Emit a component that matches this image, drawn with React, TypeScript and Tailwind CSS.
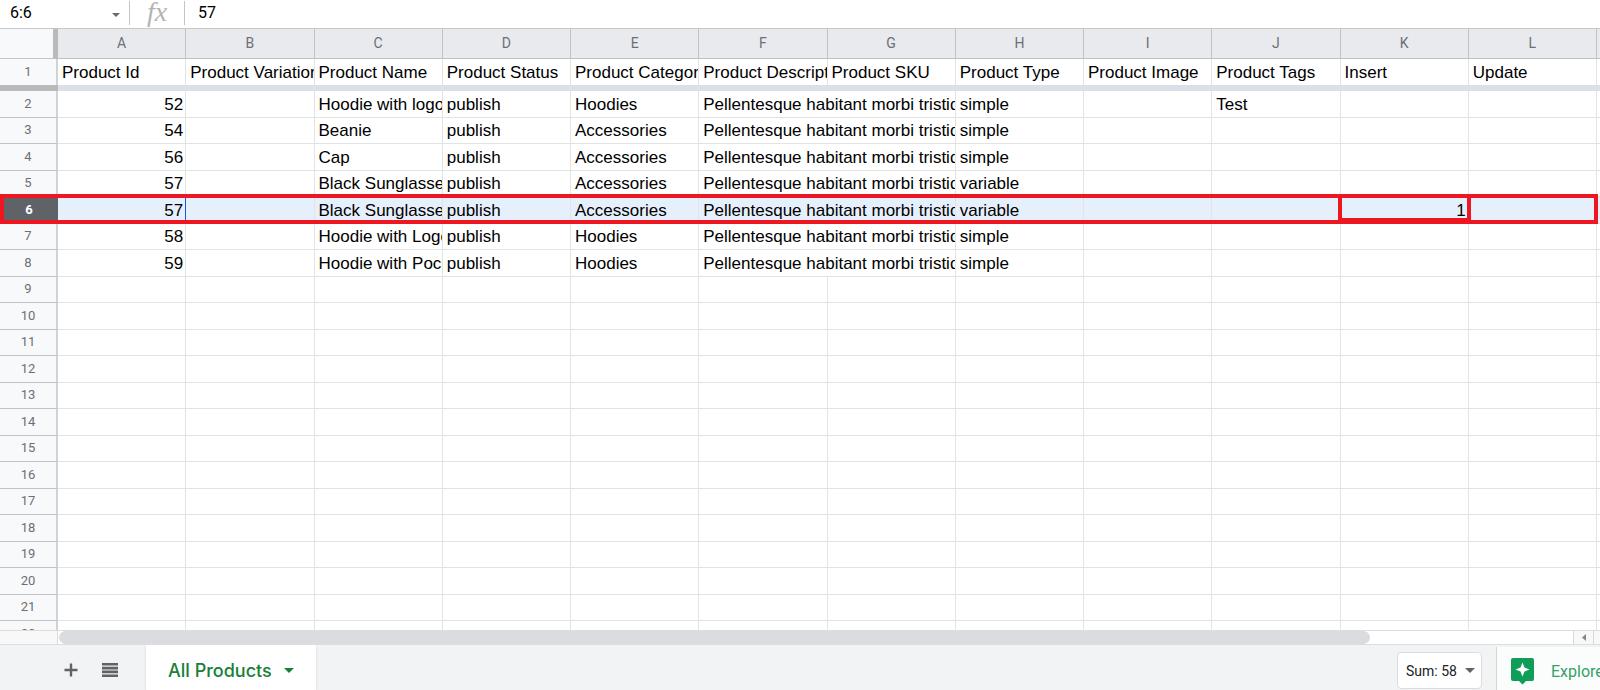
import React from 'react';

const columns = ['A', 'B', 'C', 'D', 'E', 'F', 'G', 'H', 'I', 'J', 'K', 'L'];

const headings = [
  'Product Id',
  'Product Variation Id',
  'Product Name',
  'Product Status',
  'Product Categories',
  'Product Description',
  'Product SKU',
  'Product Type',
  'Product Image',
  'Product Tags',
  'Insert',
  'Update',
];

const lorem = 'Pellentesque habitant morbi tristique';

interface Product {
  id: number;
  name: string;
  category: string;
  type: string;
  tags?: string;
  insert?: string;
}

const products: Product[] = [
  { id: 52, name: 'Hoodie with logo', category: 'Hoodies', type: 'simple', tags: 'Test' },
  { id: 54, name: 'Beanie', category: 'Accessories', type: 'simple' },
  { id: 56, name: 'Cap', category: 'Accessories', type: 'simple' },
  { id: 57, name: 'Black Sunglasses', category: 'Accessories', type: 'variable' },
  { id: 57, name: 'Black Sunglasses', category: 'Accessories', type: 'variable', insert: '1' },
  { id: 58, name: 'Hoodie with Logo', category: 'Hoodies', type: 'simple' },
  { id: 59, name: 'Hoodie with Pocket', category: 'Hoodies', type: 'simple' },
];

const SELECTED_ROW = 6;
const rowNumbers = Array.from({ length: 21 }, (_, i) => i + 2);

const cell = 'overflow-hidden whitespace-nowrap border-r border-b border-[#e2e3e3] p-0 pt-px pl-1';
const numberCell = 'relative whitespace-nowrap border-r border-b border-[#e2e3e3] p-0 pt-px pr-0.5 text-right';
const rowHead =
  "border-r-2 border-b border-r-[#d0d2d3] border-b-[#c0c2c3] bg-[#f8f9fb] p-0 pb-px text-center font-['Roboto',sans-serif] text-[13px]/4 font-normal text-[#6c6f74]";

const ProductCells: React.FC<{ product?: Product; selected: boolean }> = ({ product, selected }) => (
  <>
    <td className={numberCell}>
      {product?.id}
      {selected && <div className="absolute inset-y-0 -right-px w-px bg-[#1a57d0]" />}
    </td>
    <td className={cell} />
    <td className={cell}>{product?.name}</td>
    <td className={cell}>{product && 'publish'}</td>
    <td className={cell}>{product?.category}</td>
    {/* Descriptions run on into the empty SKU cell */}
    {product ? (
      <td colSpan={2} className={cell}>
        {lorem}
      </td>
    ) : (
      <>
        <td className={cell} />
        <td className={cell} />
      </>
    )}
    <td className={cell}>{product?.type}</td>
    <td className={cell} />
    <td className={cell}>{product?.tags}</td>
    <td className={numberCell}>
      {product?.insert}
      {selected && (
        <div className="pointer-events-none absolute -inset-x-[3px] -top-[3px] bottom-px z-10 border-4 border-[#ee1620]" />
      )}
    </td>
    <td className={cell} />
    <td className="border-b border-[#e2e3e3] p-0" />
  </>
);

const FormulaBar: React.FC = () => (
  <div className="flex h-[29px] shrink-0 items-center border-b border-[#c8c8c8] pb-0.5 font-['Roboto',sans-serif] text-base text-black">
    <input
      aria-label="Name box"
      defaultValue="6:6"
      className="w-[102px] bg-transparent pl-[10px] outline-none"
    />
    <button aria-label="Named ranges" className="flex w-[27px] justify-center pt-1">
      <svg width="8" height="4" viewBox="0 0 8 4" fill="#6b6b6b">
        <path d="M0 0h8L4 4z" />
      </svg>
    </button>
    <span className="h-6 w-px bg-[#c4c4c4]" />
    <span className="w-[54px] pb-0.5 text-center font-['Liberation_Serif',serif] text-[28px]/6 text-[#b4b4b4] italic">fx</span>
    <span className="h-6 w-px bg-[#c4c4c4]" />
    <input aria-label="Formula" defaultValue="57" className="flex-1 bg-transparent pl-[13px] outline-none" />
  </div>
);

const Sheet: React.FC = () => (
  <div className="min-h-0 flex-1 overflow-hidden">
    <table className="w-full table-fixed border-separate border-spacing-0 font-['Liberation_Sans',Arial,sans-serif] text-[17px]/5 text-black">
      <colgroup>
        <col className="w-[58px]" />
        {columns.map((c) => (
          <col key={c} />
        ))}
        <col className="w-[3px]" />
      </colgroup>
      <thead>
        <tr className="h-[30px]">
          <th className="border-r-5 border-b border-r-[#b9bab9] border-b-[#c4c5c5] bg-[#f8f9fb] p-0" />
          {columns.map((c) => (
            <th
              key={c}
              className="border-r border-b border-[#c0c1c2] bg-[#e8eaed] p-0 pb-px font-['Roboto',sans-serif] text-sm/4 font-normal text-[#6c6f74]"
            >
              {c}
            </th>
          ))}
          <th className="border-b border-[#c0c1c2] bg-[#e8eaed] p-0" />
        </tr>
        <tr className="h-[26px]">
          <th className="border-r-2 border-r-[#d0d2d3] bg-[#f8f9fb] p-0 pb-px text-center font-['Roboto',sans-serif] text-[13px]/4 font-normal text-[#6c6f74]">
            1
          </th>
          {headings.map((h) => (
            <th
              key={h}
              className="overflow-hidden border-r border-[#e2e3e3] p-0 pt-px pl-1 text-left font-normal whitespace-nowrap"
            >
              {h}
            </th>
          ))}
          <th className="p-0" />
        </tr>
        {/* Frozen row divider */}
        <tr className="h-[6px]">
          <td className="bg-[#b9bab9] p-0" />
          <td colSpan={13} className="bg-[#dadfe8] p-0" />
        </tr>
      </thead>
      <tbody>
        {rowNumbers.map((n) => {
          const selected = n === SELECTED_ROW;
          return (
            <tr key={n} className={`relative h-[26px] odd:h-[27px] ${selected ? 'bg-[#e6f0fd]' : ''}`}>
              <th
                scope="row"
                className={
                  selected
                    ? "bg-[#5f6368] p-0 pb-0.5 text-center font-['Roboto',sans-serif] text-[13px]/4 font-bold text-white"
                    : rowHead
                }
              >
                {n}
                {selected && (
                  <div className="pointer-events-none absolute -top-[3px] right-0.5 bottom-0 left-0 z-10 border-4 border-[#ee1620]" />
                )}
              </th>
              <ProductCells product={products[n - 2]} selected={selected} />
            </tr>
          );
        })}
      </tbody>
    </table>
  </div>
);

const ScrollBar: React.FC = () => (
  <div className="flex h-[15px] shrink-0 border-y border-[#dcdddd]">
    <div className="w-[58px] border-r border-[#d9d9d9] bg-[#f8f8f8]" />
    <div className="flex-1 px-px">
      <div className="h-full w-13/15 rounded-full bg-[#dadce0]" />
    </div>
    <button aria-label="Scroll left" className="flex w-5 items-center justify-center border-l border-[#d9d9d9] bg-[#f8f8f8]">
      <svg width="4" height="7" viewBox="0 0 4 7" fill="#868686">
        <path d="M4 0v7L0 3.5z" />
      </svg>
    </button>
    <div className="w-[7px] border-l border-[#d9d9d9] bg-[#f8f8f8]" />
  </div>
);

const BottomBar: React.FC = () => (
  <div className="flex h-[45px] shrink-0 overflow-hidden bg-[#f1f3f4]">
    <div className="flex w-[146px] items-center gap-6 pt-1 pl-16">
      <button aria-label="Add sheet">
        <svg width="14" height="14" viewBox="0 0 14 14" fill="#5f6368">
          <path d="M5.8 .5h2.4v5.3h5.3v2.4H8.2v5.3H5.8V8.2H.5V5.8h5.3z" />
        </svg>
      </button>
      <button aria-label="All sheets">
        <svg width="16" height="14" viewBox="0 0 16 14" fill="#5f6368">
          <path d="M0 0h16v2.6H0zM0 3.8h16v2.6H0zM0 7.6h16v2.6H0zM0 11.4h16V14H0z" />
        </svg>
      </button>
    </div>
    <button className="flex w-[170px] items-center gap-3 bg-white pt-1.5 pl-[22px] font-['Inter',sans-serif] text-lg font-medium whitespace-nowrap text-[#188038] shadow">
      All Products
      <svg width="10" height="5" viewBox="0 0 10 5" fill="#188038">
        <path d="M0 0h10L5 5z" />
      </svg>
    </button>
    <button className="mt-[7px] ml-auto flex h-[37px] w-[85px] items-center gap-2 rounded border border-[#dadce0] bg-white pl-2 font-['Roboto',sans-serif] text-sm text-[#202124]">
      Sum: 58
      <svg width="10" height="5" viewBox="0 0 10 5" fill="#5f6368">
        <path d="M0 0h10L5 5z" />
      </svg>
    </button>
    <button className="mt-[2px] ml-[14px] flex w-[104px] items-center gap-[17px] border-l border-[#d4d6d8] bg-[#fbfdfc] pt-1.5 pl-[14px] font-['Roboto',sans-serif] text-base whitespace-nowrap text-[#35a067]">
      <svg className="shrink-0" width="23" height="27" viewBox="0 0 23 27">
        <path fill="#0f9d58" d="M2 0h19a2 2 0 0 1 2 2v19a2 2 0 0 1-2 2h-6l-3.5 3.5-3.5-3.5H2a2 2 0 0 1-2-2V2a2 2 0 0 1 2-2z" />
        <path fill="#fff" d="M11.5 4.5l2 5 5 2-5 2-2 5-2-5-5-2 5-2z" />
      </svg>
      Explore
    </button>
  </div>
);

const App: React.FC = () => {
  return (
    <div className="flex h-screen flex-col overflow-hidden bg-white">
      <FormulaBar />
      <Sheet />
      <ScrollBar />
      <BottomBar />
    </div>
  );
};

export default App;
